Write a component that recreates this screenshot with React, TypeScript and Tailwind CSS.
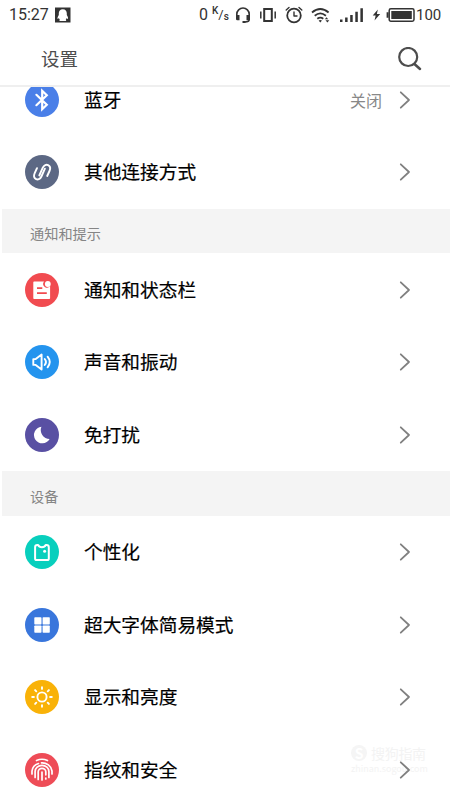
import type { ReactNode } from "react";

type Item = {
  label: string;
  color: string;
  icon: ReactNode;
  value?: string;
};

const stroke = {
  fill: "none",
  stroke: "currentColor",
  strokeLinecap: "round",
  strokeLinejoin: "round",
} as const;

const connections: Item[] = [
  {
    label: "蓝牙",
    color: "bg-[#4a7fe8]",
    value: "关闭",
    icon: <path {...stroke} strokeWidth="2.2" strokeLinejoin="miter" d="M11.4 11.8 21.8 21.7 17.2 26.2V7.8L21.8 12.3 11.4 22.2" />,
  },
  {
    label: "其他连接方式",
    color: "bg-[#5c6884]",
    icon: (
      <g {...stroke} strokeWidth="1.9">
        <path d="M12 13.2 9.7 18.2c-2.6 5.9 4.1 8.9 6.7 3.3l3.5-7.800" />
        <path d="M14.300 20.500l3.500-7.800c2.600-5.600 9.300-2.600 6.700 3.300l-2.300 5" />
      </g>
    ),
  },
];

const notifications: Item[] = [
  {
    label: "通知和状态栏",
    color: "bg-[#f14b50]",
    icon: (
      <>
        <path fill="currentColor" d="M9.1 8.6h9.900a3.700 3.700 0 0 0 6.100 4.500v12.100a.8.8 0 0 1-.8.8H9.100a.8.8 0 0 1-.8-.8V9.400a.8.8 0 0 1 .8-.8z" />
        <circle fill="currentColor" cx="22.8" cy="11" r="2.9" />
        <path fill="none" stroke="#f14b50" strokeWidth="1.8" d="M12 15.2h5.300M12 20.100h9.800" />
      </>
    ),
  },
  {
    label: "声音和振动",
    color: "bg-[#2494ee]",
    icon: (
      <g {...stroke} strokeWidth="1.9">
        <path d="M8.3 14.1h2.400l5.900-4.600v15l-5.900-4.600H8.300z" />
        <path d="M19.7 14q2.500 3 0 6M22.600 11.700q4.300 5.300 0 10.600" />
      </g>
    ),
  },
  {
    label: "免打扰",
    color: "bg-[#5950a3]",
    icon: <path fill="currentColor" d="M16.4 8.8A8.300 8.300 0 1 0 24.600 21 8.900 8.900 0 0 1 16.400 8.800z" />,
  },
];

const device: Item[] = [
  {
    label: "个性化",
    color: "bg-[#08cfbd]",
    icon: (
      <>
        <path {...stroke} strokeWidth="2" d="M10.1 12.2q0-2.200 2.200-2.200h.8q1 2.200 3.800 2.200t3.800-2.200h.8q2.300 0 2.300 2.200v11.300q0 1.600-1.600 1.600H11.700q-1.600 0-1.600-1.600z" />
        <circle fill="currentColor" cx="19.6" cy="16.3" r="1.5" />
      </>
    ),
  },
  {
    label: "超大字体简易模式",
    color: "bg-[#3976dc]",
    icon: (
      <g fill="currentColor">
        <rect x="9.3" y="9.2" width="7.2" height="7.2" rx=".7" />
        <rect x="17.6" y="9.2" width="7.2" height="7.2" rx=".7" />
        <rect x="9.3" y="17.5" width="7.2" height="7.2" rx=".7" />
        <rect x="17.6" y="17.5" width="7.2" height="7.2" rx=".7" />
      </g>
    ),
  },
  {
    label: "显示和亮度",
    color: "bg-[#f9b208]",
    icon: (
      <g {...stroke} strokeWidth="1.9">
        <circle cx="17" cy="17" r="4.6" />
        <path d="M17 7.2v1.700M17 25.100v1.700M7.200 17h1.700M25.100 17h1.700M10.100 10.100l1.200 1.200M22.700 22.700l1.200 1.200M10.100 23.900l1.200-1.200M22.700 11.300l1.200-1.200" />
      </g>
    ),
  },
  {
    label: "指纹和安全",
    color: "bg-[#ee4c57]",
    icon: (
      <g {...stroke} strokeWidth="1.7">
        <path d="M11.5 7.500q5.500-2.500 11 0" />
        <path d="M7 21v-3a10 9 0 0 1 6.500-7.500M16.500 9.900A9.800 9.500 0 0 1 27 18v3" />
        <path d="M10.100 24.500v-6a6.900 6.200 0 0 1 13.800 0v6" />
        <path d="M13.200 26.500v-7.700a3.800 3.500 0 0 1 7.600 0v3M20.800 25v1" />
        <path d="M17 19v8" />
      </g>
    ),
  },
];

function Row({ label, color, icon, value }: Item) {
  return (
    <li className="flex h-[72.6px] items-center pr-[39px] pl-[25px]">
      <span className={`flex size-[34px] shrink-0 rounded-full text-white ${color}`}>
        <svg viewBox="0 0 34 34" className="size-full">
          {icon}
        </svg>
      </span>
      <span className="ml-[25px] flex-1 pb-[2px] text-[18.7px] leading-[22px] text-black [-webkit-text-stroke:0.2px_black]">
        {label}
      </span>
      {value && <span className="mr-[17px] text-[16px] leading-5 text-[#888]">{value}</span>}
      <svg viewBox="0 0 12 20" className="h-5 w-3 text-[#808080]">
        <path {...stroke} strokeWidth="1.8" d="M1.8 2.3 10 10l-8.200 7.700" />
      </svg>
    </li>
  );
}

function SectionTitle({ children }: { children: ReactNode }) {
  return (
    <h2 className="ml-[2px] flex h-[44.8px] items-center bg-[#f4f4f4] pt-[6px] pl-[28px] text-[14.2px] text-[#858585]">
      {children}
    </h2>
  );
}

function StatusBar() {
  return (
    <div className="flex h-7 items-center pt-px pl-[9px] font-[Roboto,sans-serif] text-[16px] text-[#333]">
      <span className="w-[37px]">15:27</span>
      <svg viewBox="0 0 16 16" className="ml-[9px] size-4">
        <path fill="#333" d="M0 .5h15.500v15H0z" />
        <path fill="#fff" d="M7.800 2.200c-2.700 0-4 1.700-4 4v1.700c-.8 1.200-1.500 2.600-1.200 3.800.3.500.9 0 1.300-.6.200.9.6 1.400 1 1.800-.6.300-.8 1 .1 1.100h5.600c.9-.1.7-.8.1-1.100.4-.4.8-.9 1-1.800.4.600 1 1.100 1.300.6.300-1.200-.4-2.600-1.200-3.800V6.200c0-2.300-1.300-4-4-4z" />
      </svg>
      <span className="ml-[128px] w-[9px]">0</span>
      <span className="ml-[4px] flex w-[16px] items-center text-[10px] leading-none font-medium">
        <span className="-mt-[7px]">K</span>
        <span className="text-[13px] font-normal">/</span>
        <span className="mt-[5px]">s</span>
      </span>
      <svg viewBox="0 0 16 18" className="ml-[7px] h-[18px] w-4">
        <path {...stroke} strokeWidth="1.6" d="M1.800 11V8.200a6.200 6.200 0 0 1 12.400 0v5.300q0 2.500-4.500 2.500" />
        <path fill="currentColor" d="M1 9h3.500v5.300H2.200Q1 14.300 1 13zM11.500 9H15v4q0 1.300-1.200 1.300h-2.300zM7.500 15h3v2h-3z" />
      </svg>
      <svg viewBox="0 0 16 16" className="ml-[9px] size-4">
        <path fill="none" stroke="currentColor" strokeWidth="2" d="M4.200 2.100h7.600v11.800H4.200z" />
        <path fill="none" stroke="currentColor" strokeWidth="1.500" d="M.8 4.500v7M15.200 4.500v7" />
      </svg>
      <svg viewBox="0 0 18 18" className="ml-[9px] size-[18px]">
        <circle {...stroke} strokeWidth="1.8" cx="9" cy="9.5" r="6.8" />
        <path {...stroke} strokeWidth="1.4" d="M9 6v4h3M1.200 4l2.800-2.500M16.800 4 14 1.500" />
      </svg>
      <svg viewBox="0 0 20 18" className="ml-[8px] h-[18px] w-5">
        <path {...stroke} strokeWidth="1.8" strokeLinecap="butt" d="M1 6.500q8.300-7 16.600 0M3.700 9.700q5.600-4.600 11.200 0M6.300 12.700q3-2.300 6 0" />
        <path fill="currentColor" d="m9.300 16.500-1.700-1.900q1.700-1.200 3.400 0zM13.800 13.200l1.700-2 1.700 2zM14.500 14.200h3.800l-1.900 2.300z" />
      </svg>
      <svg viewBox="0 0 24 16" className="ml-[9px] h-4 w-6">
        <path fill="currentColor" d="M0 12.500h2.500V15H0zM5.100 10.500h2.500V15H5.100zM10.200 8h2.500v7h-2.500zM15.300 4.800h2.500V15h-2.500zM20.400 1.200h2.500V15h-2.500z" />
      </svg>
      <svg viewBox="0 0 10 14" className="ml-[8px] h-[14px] w-[9px]">
        <path fill="currentColor" d="M6.500.8.800 7.600h3.300L2.800 13l6.300-7H5.400z" />
      </svg>
      <svg viewBox="0 0 30 16" className="ml-[5px] h-4 w-[30px]">
        <rect x="3.2" y="1.7" width="24.8" height="12.6" rx="1.7" fill="none" stroke="currentColor" strokeWidth="1.5" />
        <path fill="currentColor" d="M5.300 3.900h20.500v8.200H5.300zM.6 5.300h2v5.400h-2z" />
      </svg>
      <span className="pt-px text-[15px]">100</span>
    </div>
  );
}

// Faint brand stamp over the lower right corner.
function Watermark() {
  return (
    <div className="pointer-events-none absolute top-[743px] left-[351px] w-[80px] text-[#f3f3f3]">
      <div className="flex items-center gap-1 text-[14px] leading-5">
        <span className="flex size-4 items-center justify-center rounded-full bg-[#f5f5f5] text-[14px] font-bold text-white">S</span>
        <span className="tracking-[-0.3px]">搜狗指南</span>
      </div>
      <p className="text-[9px] leading-3">zhinan.sogou.com</p>
    </div>
  );
}

export default function App() {
  return (
    <div className="relative isolate flex h-[800px] w-[450px] flex-col overflow-hidden bg-white font-['Noto_Sans_CJK_SC',sans-serif]">
      <StatusBar />
      <header className="flex h-[59px] shrink-0 items-center justify-between border-b-2 border-[#efefef] pr-[28px] pl-[41px]">
        <h1 className="pt-[4px] text-[18.5px] text-[#4d4d4d]">设置</h1>
        <svg viewBox="0 0 24 24" className="mt-[5px] size-6 text-[#4d4d4d]">
          <circle {...stroke} strokeWidth="2.2" cx="10.2" cy="10" r="9" />
          <path {...stroke} strokeWidth="2.5" d="m17 17.500 5 4.500" />
        </svg>
      </header>
      <Watermark />
      <main className="relative min-h-0 flex-1 overflow-hidden">
        <ul className="-mt-[23.6px]">
          {connections.map((item) => (
            <Row key={item.label} {...item} />
          ))}
        </ul>
        <SectionTitle>通知和提示</SectionTitle>
        <ul>
          {notifications.map((item) => (
            <Row key={item.label} {...item} />
          ))}
        </ul>
        <SectionTitle>设备</SectionTitle>
        <ul>
          {device.map((item) => (
            <Row key={item.label} {...item} />
          ))}
        </ul>
      </main>
    </div>
  );
}
